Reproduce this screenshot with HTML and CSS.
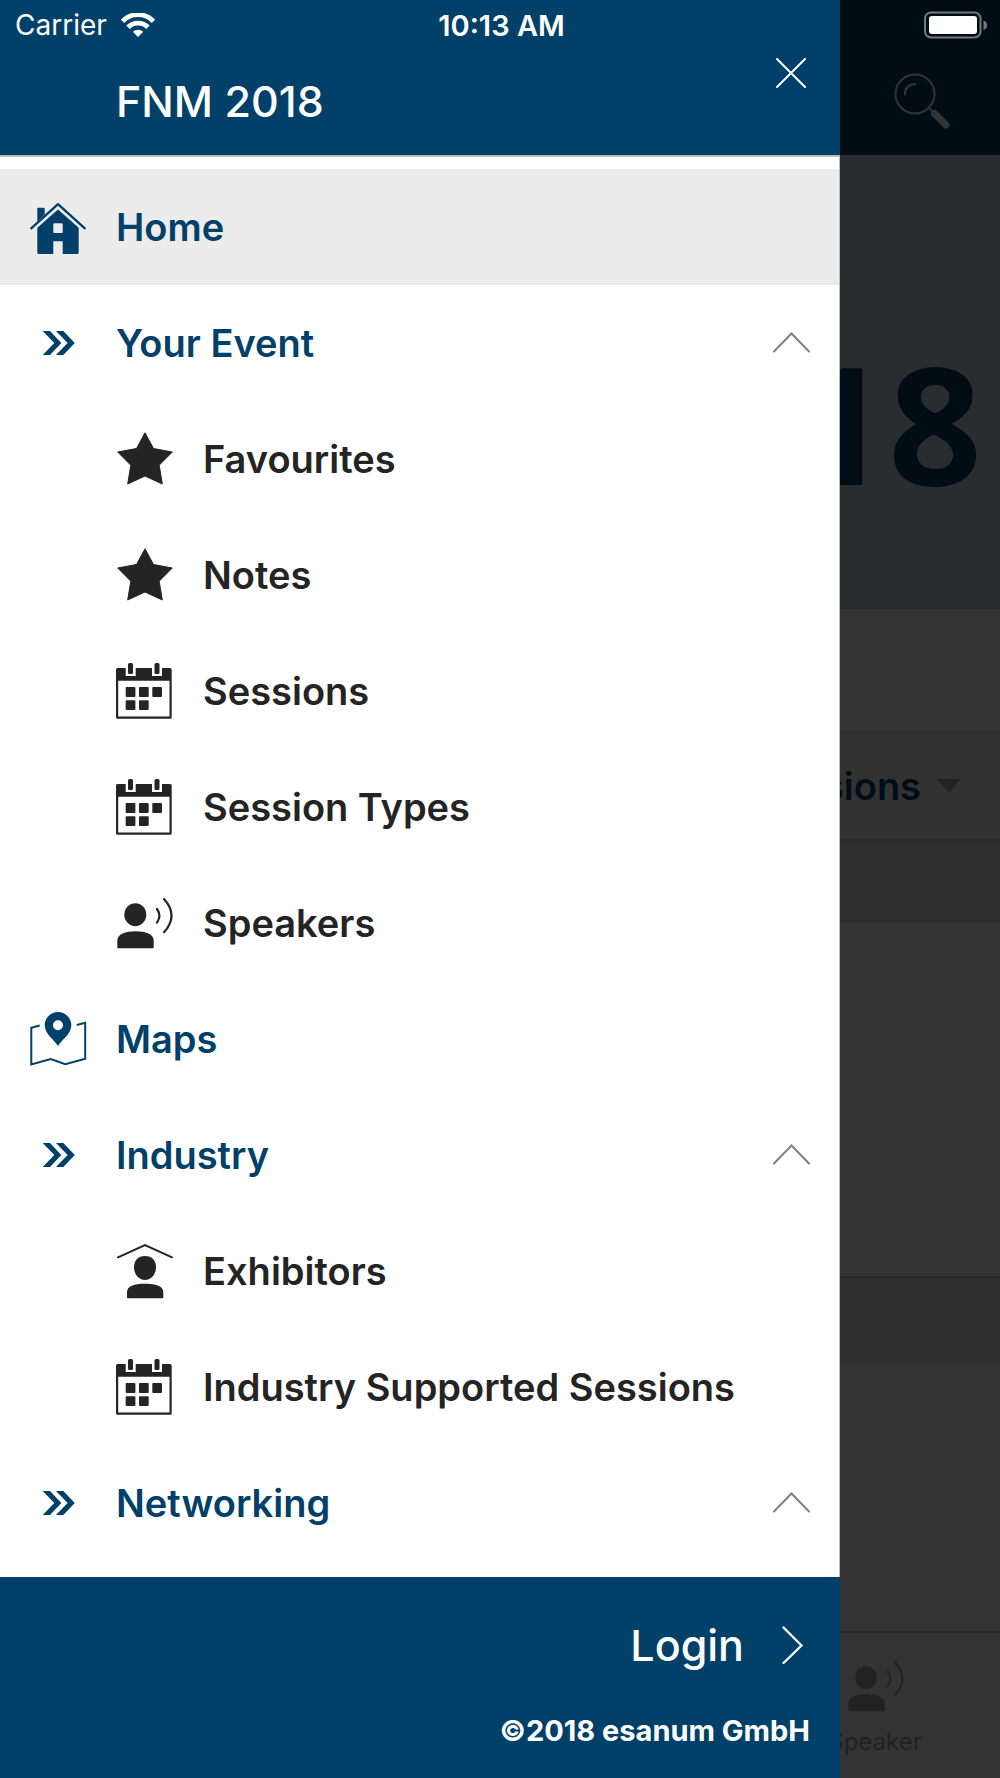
FILE: index.html
```html
<!DOCTYPE html>
<html lang="en">

<head>
  <meta charset="UTF-8">
  <meta name="viewport" content="width=device-width, initial-scale=1.0">
  <title>FNM 2018</title>
  <link rel="stylesheet" href="styles.css">
</head>

<body>
  <!-- shared icons -->
  <svg class="sprite" aria-hidden="true">
    <symbol id="home" viewBox="0 0 56 56">
      <path d="M1.2 29.3 28 5.2l26.800 24.100" fill="none" stroke="currentColor" stroke-width="2.300" stroke-linecap="round" stroke-linejoin="round" />
      <path d="M7.300 22.500V9.700q0-1 1-1h5.400q1 0 1 1V15.500z" />
      <path fill-rule="evenodd" d="M28 10.500 48.700 28.800V53.500q0 1.500-1.500 1.500H32.700V42.300H23.300V55H8.800q-1.500 0-1.500-1.500V28.800zM24.300 24.300q-1 0-1 1V33q0 1 1 1h7.400q1 0 1-1v-7.700q0-1-1-1z" />
    </symbol>
    <symbol id="double" viewBox="0 0 56 56">
      <path d="M12.700 16H20l11.300 12L20 40h-7.300l11.600-12zM26 16h7.300l11.500 12-11.500 12H26l11.600-12z" />
    </symbol>
    <symbol id="star" viewBox="0 0 56 56">
      <path d="M29 1.800 37.500 17.500 56.300 21 43.200 34.200 46.300 53 29 45 11.700 53 14.800 34.200 1.700 21 20.500 17.500z" stroke="currentColor" stroke-linejoin="round" />
    </symbol>
    <symbol id="calendar" viewBox="0 0 56 56">
      <path fill-rule="evenodd" d="M1.500 5H9.700v8h10V5H36v8h10V5h8.200q1.500 0 1.500 1.500v47.700q0 1.500-1.500 1.500H1.500Q0 55.700 0 54.200V6.500Q0 5 1.500 5zM2.200 17.700v35.800h51.300V17.700z" />
      <rect x="12" y="0" width="5" height="11" rx="1.500" />
      <rect x="38.500" y="0" width="5" height="11" rx="1.500" />
      <rect x="9.700" y="24" width="9.700" height="10" rx="1" />
      <rect x="23" y="24" width="9.700" height="10" rx="1" />
      <rect x="36.300" y="24" width="9.700" height="10" rx="1" />
      <rect x="9.700" y="37.300" width="9.700" height="9.700" rx="1" />
      <rect x="23" y="37.300" width="9.700" height="9.700" rx="1" />
    </symbol>
    <symbol id="speaker" viewBox="0 0 56 56">
      <ellipse cx="19.300" cy="19.700" rx="11" ry="11.500" />
      <path d="M1.300 52.300V46c0-7 8-9.700 18.200-9.700S37.700 39 37.700 46v6.300q0 1-1 1H2.300q-1 0-1-1z" />
      <path d="M41 14q4.800 6.800 0 13.600M48 4q15 16.600 0 33.300" fill="none" stroke="currentColor" stroke-width="2.200" stroke-linecap="round" />
    </symbol>
    <symbol id="map" viewBox="0 0 56 56">
      <path fill-rule="evenodd" d="M28 35C24 28.500 14.700 23 14.700 14.300a13.300 13.300 0 0 1 26.600 0C41.300 23 32 28.500 28 35zM28 9.300a5 5 0 1 0 0 10 5 5 0 0 0 0-10z" />
      <path d="M9.700 14.500 1.300 16.800V53.500L20.700 48 35.300 53.200 55.200 47.800V11.900L46.800 14" fill="none" stroke="currentColor" stroke-width="2" />
    </symbol>
    <symbol id="exhibitor" viewBox="0 0 56 56">
      <path d="M2 14.300 29 2.200 56 14.300" fill="none" stroke="currentColor" stroke-width="2" stroke-linecap="round" />
      <path d="M29 13c7 0 11 4.500 11 11.300C40 31.500 35 37 29 37s-11-5.500-11-12.700C18 17.500 22 13 29 13z" />
      <path d="M11 54.300V49c0-6 7-8.300 18-8.300S47.300 43 47.300 49v5.300q0 1-1 1H12q-1 0-1-1z" />
    </symbol>
    <symbol id="up" viewBox="0 0 38 56">
      <path d="M2 36.500 19.500 18.500 37 36.500" fill="none" stroke="currentColor" stroke-width="2" stroke-linecap="round" />
    </symbol>
  </svg>

  <div class="app">
    <div class="page">
      <header class="page-header">
        <svg class="icon" viewBox="0 0 56 56">
          <circle cx="21" cy="21" r="19.500" fill="none" stroke="currentColor" stroke-width="2" />
          <path d="M11 21.500q0-10 10.500-10.500M34.500 34.500 40 40" fill="none" stroke="currentColor" stroke-width="2" stroke-linecap="round" />
          <path d="M40.500 40.500 52 52" stroke="currentColor" stroke-width="7" stroke-linecap="round" />
        </svg>
      </header>
      <div class="hero">2018</div>
      <div class="blank"></div>
      <div class="filter">
        Sessions
        <svg width="24" height="14" viewBox="0 0 24 14"><path d="M0 0h24L12 14z" /></svg>
      </div>
      <div class="band"></div>
      <div class="panel"></div>
      <div class="band shaded"></div>
      <div class="rest"></div>
      <footer class="tabs">
        <div class="tab">
          <svg class="icon"><use href="#speaker" /></svg>
          <span>Speaker</span>
        </div>
      </footer>
    </div>

    <div class="backdrop"></div>

    <aside class="drawer">
      <header class="drawer-header">
        <h1>FNM 2018</h1>
        <button class="close" aria-label="Close">
          <svg width="30" height="30" viewBox="0 0 30 30"><path d="M1 1 29 29M29 1 1 29" fill="none" stroke="currentColor" stroke-width="2" stroke-linecap="round" /></svg>
        </button>
      </header>

      <nav class="menu">
        <a class="row active" href="#"><svg class="icon"><use href="#home" /></svg>Home</a>
        <button class="row"><svg class="icon"><use href="#double" /></svg>Your Event<svg class="arrow"><use href="#up" /></svg></button>
        <a class="row sub" href="#"><svg class="icon"><use href="#star" /></svg>Favourites</a>
        <a class="row sub" href="#"><svg class="icon"><use href="#star" /></svg>Notes</a>
        <a class="row sub" href="#"><svg class="icon"><use href="#calendar" /></svg>Sessions</a>
        <a class="row sub" href="#"><svg class="icon"><use href="#calendar" /></svg>Session Types</a>
        <a class="row sub" href="#"><svg class="icon"><use href="#speaker" /></svg>Speakers</a>
        <a class="row" href="#"><svg class="icon"><use href="#map" /></svg>Maps</a>
        <button class="row"><svg class="icon"><use href="#double" /></svg>Industry<svg class="arrow"><use href="#up" /></svg></button>
        <a class="row sub" href="#"><svg class="icon"><use href="#exhibitor" /></svg>Exhibitors</a>
        <a class="row sub" href="#"><svg class="icon"><use href="#calendar" /></svg>Industry Supported Sessions</a>
        <button class="row"><svg class="icon"><use href="#double" /></svg>Networking<svg class="arrow"><use href="#up" /></svg></button>
      </nav>

      <footer class="drawer-footer">
        <a class="login" href="#">
          Login
          <svg width="38" height="38" viewBox="0 0 38 38"><path d="M11.500 1.500 29.500 19.500 11.500 37" fill="none" stroke="currentColor" stroke-width="2.300" stroke-linecap="round" /></svg>
        </a>
        <p>©2018 esanum GmbH</p>
      </footer>
    </aside>

    <div class="status">
      <div class="carrier">
        Carrier
        <svg width="34" height="24" viewBox="0 0 34 24">
          <path d="M1.500 8.300a21.500 21.500 0 0 1 31 0M7 14.300a14 14 0 0 1 20 0" fill="none" stroke="currentColor" stroke-width="4.800" />
          <path d="M17 24 11.800 18.800a7.500 7.500 0 0 1 10.400 0z" fill="currentColor" />
        </svg>
      </div>
      <time>10:13 AM</time>
      <svg class="battery" width="64" height="28" viewBox="0 0 64 28">
        <rect x="1" y="1.500" width="55.500" height="25" rx="6" fill="none" stroke="#737b80" stroke-width="2" />
        <rect x="5" y="5" width="48" height="18" rx="3" fill="#fff" />
        <path d="M59.500 9.500q3.500 1 3.500 4.800t-3.500 4.700z" fill="#737b80" />
      </svg>
    </div>
  </div>
</body>

</html>
```
FILE: styles.css
```css
* {
  box-sizing: border-box;
}

body {
  margin: 0;
  font-family: Inter, "Liberation Sans", sans-serif;
}

h1,
p {
  margin: 0;
}

a {
  color: inherit;
  text-decoration: none;
}

button {
  border: 0;
  padding: 0;
  background: none;
  color: inherit;
  font: inherit;
  text-align: left;
  cursor: pointer;
}

.sprite {
  display: none;
}

symbol {
  overflow: visible;
}

/* page, backdrop, drawer and status bar are stacked in one cell */
.app {
  display: grid;
  min-height: 100vh;
}

.page,
.backdrop,
.drawer,
.status {
  grid-area: 1 / 1;
}

.icon {
  width: 56px;
  height: 56px;
  flex: none;
  fill: currentColor;
  overflow: visible;
}

/* page behind the drawer */
.page {
  display: flex;
  flex-direction: column;
  background: #fff;
}

.page-header {
  display: flex;
  justify-content: flex-end;
  height: 155px;
  padding: 73px 50px 0 0;
  background: #004069;
  color: #fff;
}

.hero {
  height: 454px;
  padding: 157px 18px 0 0;
  background: #d8dcf0;
  color: #004069;
  font: bold 164px/220px "Open Sans", sans-serif;
  text-align: right;
}

.blank {
  height: 123px;
}

.filter {
  display: flex;
  align-items: center;
  justify-content: flex-end;
  gap: 16px;
  height: 109px;
  padding-right: 39px;
  border-top: 1px solid #d8d8d8;
  border-bottom: 2px solid #d0d0d0;
  background: #fafafa;
  color: #004069;
  font-size: 38px;
  font-weight: 600;
}

.filter svg {
  fill: #a0b4c4;
}

.band {
  height: 81px;
  background: #e6e6e6;
}

.panel {
  height: 354px;
}

.shaded {
  height: 87px;
  border-top: 3px solid #d2d2d2;
}

.rest {
  flex: 1;
}

.tabs {
  display: flex;
  justify-content: flex-end;
  height: 147px;
  padding-top: 25px;
  border-top: 2px solid #d0d0d0;
  color: #aaa;
  font-size: 24px;
}

.tab {
  display: flex;
  flex-direction: column;
  align-items: center;
  gap: 13px;
  width: 25%;
  line-height: 30px;
}

.backdrop {
  background: rgba(0, 0, 0, 0.8);
}

/* drawer */
.drawer {
  display: flex;
  flex-direction: column;
  width: 84%;
  background: #fff;
  z-index: 1;
}

.drawer-header {
  display: flex;
  align-items: flex-start;
  justify-content: space-between;
  padding: 47px 23px 28px 116px;
  background: #004069;
  border-bottom: 2px solid #bbb;
  color: #fff;
}

.drawer-header h1 {
  margin-top: 28px;
  font-size: 43px;
  font-weight: 500;
  line-height: 52px;
}

.close {
  display: flex;
  align-items: center;
  justify-content: center;
  width: 52px;
  height: 52px;
}

.menu {
  display: flex;
  flex-direction: column;
  flex: 1;
  padding: 12px 0 16px;
  border-right: 1px solid #bbb;
}

.row {
  display: flex;
  align-items: center;
  gap: 30px;
  height: 116px;
  padding: 0 29px 0 30px;
  color: #004069;
  font-size: 38px;
  font-weight: 600;
}

.sub {
  gap: 31px;
  padding-left: 116px;
  color: #242424;
}

.active {
  background: #ececec;
}

.arrow {
  width: 38px;
  height: 56px;
  margin-left: auto;
  color: #808080;
}

.drawer-footer {
  padding: 38px 30px 27px;
  background: #004069;
  color: #fff;
  text-align: right;
}

.login {
  display: flex;
  align-items: center;
  justify-content: flex-end;
  gap: 28px;
  font-size: 43px;
  font-weight: 500;
  line-height: 60px;
}

.drawer-footer p {
  margin-top: 36px;
  font-size: 29px;
  font-weight: 700;
  line-height: 40px;
}

/* status bar */
.status {
  display: grid;
  grid-template-columns: 1fr auto 1fr;
  align-items: center;
  align-self: start;
  height: 50px;
  padding: 0 12px 0 15px;
  color: #fff;
  font-size: 28px;
  z-index: 2;
}

.carrier {
  display: flex;
  align-items: center;
  gap: 14px;
}

.status time {
  font-size: 29px;
  font-weight: 600;
}

.battery {
  justify-self: end;
}
```
